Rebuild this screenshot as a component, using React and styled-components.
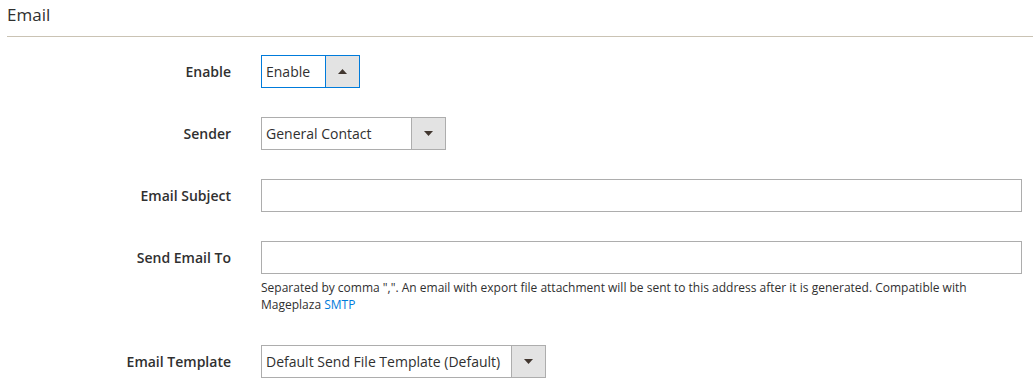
import React from "react";
import styled, { createGlobalStyle } from "styled-components";

const Global = createGlobalStyle`
  html, body { margin: 0; padding: 0; background: #fff; }
  body { font-family: "Open Sans", "Noto Sans", sans-serif; color: #303030; }
  * { box-sizing: border-box; }
`;

const Page = styled.div`
  width: 1033px;
  padding: 0 0 0 7px;
`;

const SectionTitle = styled.h2`
  margin: 0;
  padding: 3px 0 10px 0;
  font-size: 17px;
  line-height: 23px;
  font-weight: 400;
  color: #303030;
  border-bottom: 1px solid #cac3b4;
`;

const Fieldset = styled.div`
  display: flex;
  flex-direction: column;
  padding: 18px 11px 0 0;
`;

const Field = styled.div`
  display: grid;
  grid-template-columns: 224px 1fr;
  column-gap: 30px;
  margin-bottom: ${(p) => p.$mb ?? 29}px;
`;

const Label = styled.label`
  display: flex;
  align-items: center;
  justify-content: flex-end;
  height: 33px;
  font-size: 14px;
  font-weight: 600;
  color: #303030;
  text-align: right;
`;

const Control = styled.div`
  display: flex;
  flex-direction: column;
`;

const SelectBox = styled.div`
  display: flex;
  width: ${(p) => p.$width}px;
  height: 33px;
  border: 1px solid ${(p) => (p.$open ? "#007bdb" : "#adadad")};
  background: #fff;
`;

const SelectValue = styled.div`
  flex: 1;
  display: flex;
  align-items: center;
  padding-left: 4px;
  font-size: 14px;
  color: #303030;
  white-space: nowrap;
  overflow: hidden;
`;

const ArrowBox = styled.div`
  width: 34px;
  flex: none;
  display: flex;
  align-items: center;
  justify-content: center;
  background: #e3e3e3;
  border-left: 1px solid ${(p) => (p.$open ? "#007bdb" : "#adadad")};
`;

const TextInput = styled.input`
  width: 100%;
  height: 33px;
  border: 1px solid #adadad;
  background: #fff;
  padding: 0 4px;
  font-family: inherit;
  font-size: 14px;
  color: #303030;
  outline: none;
`;

const Note = styled.div`
  margin-top: 5px;
  font-size: 12px;
  line-height: 17px;
  color: #303030;
  padding-right: 40px;
`;

const Link = styled.a`
  color: #007bdb;
  text-decoration: none;
`;

function Arrow({ up }) {
  return (
    <svg width="9" height="5" viewBox="0 0 9 5">
      {up ? (
        <path d="M0 5 L4.5 0 L9 5 Z" fill="#41362f" />
      ) : (
        <path d="M0 0 L9 0 L4.5 5 Z" fill="#41362f" />
      )}
    </svg>
  );
}

function Select({ value, width, open }) {
  return (
    <SelectBox $width={width} $open={open}>
      <SelectValue>{value}</SelectValue>
      <ArrowBox $open={open}>
        <Arrow up={open} />
      </ArrowBox>
    </SelectBox>
  );
}

export default function App() {
  return (
    <>
      <Global />
      <Page>
        <SectionTitle>Email</SectionTitle>
        <Fieldset>
          <Field>
            <Label>Enable</Label>
            <Control>
              <Select value="Enable" width={99} open />
            </Control>
          </Field>
          <Field>
            <Label>Sender</Label>
            <Control>
              <Select value="General Contact" width={185} />
            </Control>
          </Field>
          <Field>
            <Label>Email Subject</Label>
            <Control>
              <TextInput type="text" />
            </Control>
          </Field>
          <Field $mb={32}>
            <Label>Send Email To</Label>
            <Control>
              <TextInput type="text" />
              <Note>
                Separated by comma ",". An email with export file attachment will be sent to this address after it is generated. Compatible with Mageplaza <Link href="#">SMTP</Link>
              </Note>
            </Control>
          </Field>
          <Field>
            <Label>Email Template</Label>
            <Control>
              <Select value="Default Send File Template (Default)" width={285} />
            </Control>
          </Field>
        </Fieldset>
      </Page>
    </>
  );
}
